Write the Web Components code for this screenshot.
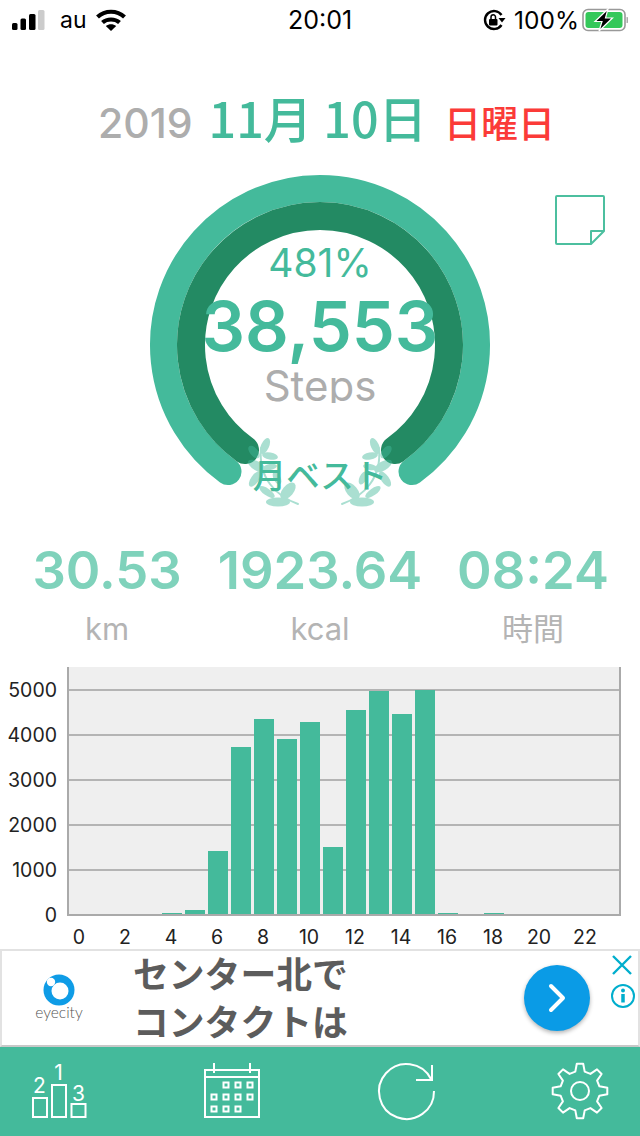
<!DOCTYPE html>
<html lang="ja">
<head>
<meta charset="utf-8">
<title>Steps</title>
<style>
  html, body { margin: 0; padding: 0; background: white; }
  body {
    width: 640px;
    height: 1136px;
    overflow: hidden;
    display: flex;
    flex-direction: column;
    font-family: Inter, "Noto Sans CJK JP", sans-serif;
    --green: #44ba9b;
    --cjk: "Noto Sans CJK JP", Inter, sans-serif;
  }
  hourly-chart { margin-top: auto; }
</style>
</head>
<body>
<status-bar></status-bar>
<date-header year="2019" day="11月 10日" weekday="日曜日"></date-header>
<step-gauge percent="481%" steps="38,553" unit="Steps" badge="月ベスト"></step-gauge>
<stat-row>
  <stat-item value="30.53" label="km"></stat-item>
  <stat-item value="1923.64" label="kcal"></stat-item>
  <stat-item value="08:24" label="時間"></stat-item>
</stat-row>
<hourly-chart data="0,0,0,0,20,90,1400,3733,4355,3911,4289,1489,4555,4978,4467,5000,25,0,25,0,0,0,0,0"></hourly-chart>
<ad-banner></ad-banner>
<tab-bar></tab-bar>

<script>
class StatusBar extends HTMLElement {
  constructor() {
    super();
    this.attachShadow({ mode: 'open' }).innerHTML = `
    <style>
      :host {
        display: flex;
        align-items: center;
        height: 40px;
        padding: 0 12px;
        font-size: 24px;
        color: #000;
      }
      .left, .right { flex: 1; display: flex; align-items: center; }
      .right { justify-content: flex-end; }
      svg { display: block; }
      .time { font-size: 25px; }
      .carrier { margin: 0 9px 0 15px; font-size: 23px; }
      .batt { margin-left: 3px; }
      .pct { margin-left: 8px; font-size: 24.5px; }
    </style>
    <div class="left">
      <svg width="33" height="20" viewBox="0 0 33 20">
        <rect x="0" y="13" width="5.5" height="7" rx="1.5" fill="#000"/>
        <rect x="8.5" y="8.5" width="5.5" height="11.5" rx="1.5" fill="#000"/>
        <rect x="17" y="4" width="6.5" height="16" rx="1.5" fill="#000"/>
        <rect x="26" y="0" width="6.5" height="20" rx="1.5" fill="#ccc"/>
      </svg>
      <span class="carrier">au</span>
      <svg width="30" height="22" viewBox="0 0 30 22" fill="none" stroke="#000" stroke-width="4.2">
        <path d="M1.5 8 C9 1 21 1 28.5 8"/>
        <path d="M6.5 13.5 C11 9.5 19 9.5 23.5 13.5"/>
        <path d="M15 22 L9.8 17 C13 14.8 17 14.8 20.2 17 Z" fill="#000" stroke="none"/>
      </svg>
    </div>
    <span class="time">20:01</span>
    <div class="right">
      <svg width="23" height="22" viewBox="0 0 23 22" fill="none">
        <path d="M18.5 6 A9 9 0 1 0 18.5 16" stroke="#000" stroke-width="2.4"/>
        <path d="M15.5 9 L22.5 9 L19 13.5 Z" fill="#000"/>
        <rect x="6" y="10" width="8.5" height="6.5" rx="1" fill="#000"/>
        <path d="M8 10 V8 A2.2 2.2 0 0 1 12.5 8 V10" stroke="#000" stroke-width="1.5"/>
      </svg>
      <span class="pct">100%</span>
      <svg class="batt" width="46" height="24" viewBox="0 0 46 24" fill="none">
        <rect x="1" y="1.5" width="42" height="21" rx="5" stroke="#999" stroke-width="1.6"/>
        <rect x="3.5" y="4" width="37" height="16" rx="3" fill="#34c85a"/>
        <path d="M44.5 9 V15 A3 3 0 0 0 44.5 9 Z" fill="#aaa"/>
        <path d="M26 1 L13 13.5 H20 L17 23 L30.5 10 H23.5 Z" fill="#000" stroke="#fff" stroke-width="1.2"/>
      </svg>
    </div>
    `;
  }
}

class DateHeader extends HTMLElement {
  constructor() {
    super();
    this.attachShadow({ mode: 'open' });
  }

  connectedCallback() {
    this.shadowRoot.innerHTML = `
    <style>
      :host {
        display: flex;
        justify-content: center;
        align-items: baseline;
        height: 125px;
        box-sizing: border-box;
        padding: 47px 0 0 13px;
        gap: 20px;
        line-height: 60px;
        font-family: var(--cjk);
      }
      .year { font: 500 41px/60px Inter, sans-serif; color: #adadad; margin-right: -4px; }
      .day { font-size: 48.5px; font-weight: 500; color: var(--green); }
      .weekday { font-size: 37px; font-weight: 500; color: #fb3b38; margin-left: -3px; }
    </style>
    <span class="year">${this.getAttribute('year')}</span>
    <span class="day">${this.getAttribute('day')}</span>
    <span class="weekday">${this.getAttribute('weekday')}</span>
    `;
  }
}

// leaves of the left branch, mirrored for the right one: cx, cy, rx, ry, angle
const LEAVES = [
  [265, 446, 8.5, 4, -65], [270, 456, 8, 3.5, 10], [254, 452, 7.5, 4, 50],
  [257, 466, 10, 4.5, 30], [255, 479, 9, 4, -55], [270, 467, 7, 3, -10],
  [277, 478, 7, 3.5, 65], [288, 491, 10, 5.5, -50], [267, 492, 9, 3.5, 35],
  [278, 502, 12, 4.5, 0],
];
const STEM = 'M298 504 C276 496 258 478 261 448';

class StepGauge extends HTMLElement {
  constructor() {
    super();
    this.attachShadow({ mode: 'open' });
  }

  connectedCallback() {
    const leaves = LEAVES.map(([cx, cy, rx, ry, a]) =>
      `<ellipse cx="${cx}" cy="${cy}" rx="${rx}" ry="${ry}" transform="rotate(${a} ${cx} ${cy})"/>`).join('');
    const branch = `${leaves}<path d="${STEM}" fill="none" stroke="#44ba9b" stroke-width="2"/>`;
    this.shadowRoot.innerHTML = `
    <style>
      :host {
        display: grid;
        height: 350px;
        position: relative;
        color: var(--green);
      }
      svg.ring, .labels { grid-area: 1 / 1; }
      svg.ring { display: block; }
      .labels {
        display: flex;
        flex-direction: column;
        align-items: center;
        padding-top: 73px;
      }
      .percent { font-size: 39px; line-height: 50px; }
      .steps { font-size: 68.5px; line-height: 76px; font-weight: 600; margin-top: 1px; }
      .unit { font-size: 42px; line-height: 42px; height: 38px; overflow: hidden; color: #adadad; }
      .badge { font: 500 33.5px/40px var(--cjk); margin-top: 51px; }
      .note { position: absolute; left: 554px; top: 29px; }
    </style>
    <svg class="ring" width="640" height="350" viewBox="0 165 640 350" fill="none" stroke-linecap="round">
      <path d="M228 471.6 A156.5 156.5 0 1 1 412 471.6" stroke="#44ba9b" stroke-width="27"/>
      <path d="M245 450 A129 129 0 1 1 395 450" stroke="#238a63" stroke-width="28"/>
      <g opacity=".45" fill="#44ba9b">
        <g>${branch}</g>
        <g transform="matrix(-1 0 0 1 640 0)">${branch}</g>
      </g>
    </svg>
    <div class="labels">
      <div class="percent">${this.getAttribute('percent')}</div>
      <div class="steps">${this.getAttribute('steps')}</div>
      <div class="unit">${this.getAttribute('unit')}</div>
      <div class="badge">${this.getAttribute('badge')}</div>
    </div>
    <svg class="note" width="52" height="52" viewBox="0 0 52 52" fill="none" stroke="#4cbf9f" stroke-width="2" stroke-linejoin="round">
      <path d="M3 2 H49 A1 1 0 0 1 50 3 V37 L37 50 H3 A1 1 0 0 1 2 49 V3 A1 1 0 0 1 3 2 Z"/>
      <path d="M37 50 V37 H50"/>
    </svg>
    `;
  }
}

class StatRow extends HTMLElement {
  constructor() {
    super();
    this.attachShadow({ mode: 'open' }).innerHTML = `
    <style>
      :host {
        display: grid;
        grid-template-columns: repeat(3, 213px);
        justify-content: center;
        padding-top: 22px;
      }
    </style>
    <slot></slot>
    `;
  }
}

class StatItem extends HTMLElement {
  constructor() {
    super();
    this.attachShadow({ mode: 'open' });
  }

  connectedCallback() {
    this.shadowRoot.innerHTML = `
    <style>
      :host {
        display: flex;
        flex-direction: column;
        align-items: center;
      }
      .value { font-size: 52.5px; line-height: 66px; font-weight: 600; color: #7fd2bb; white-space: nowrap; }
      .label { font: 31px/44px Inter, var(--cjk); color: #b4b4b4; margin-top: 4px; }
    </style>
    <div class="value">${this.getAttribute('value')}</div>
    <div class="label">${this.getAttribute('label')}</div>
    `;
  }
}

class HourlyChart extends HTMLElement {
  constructor() {
    super();
    this.attachShadow({ mode: 'open' });
  }

  connectedCallback() {
    const values = this.getAttribute('data').split(',').map(Number);
    const yLabels = [5000, 4000, 3000, 2000, 1000, 0];
    const xLabels = [...Array(12)].map((_, i) => i * 2);
    this.shadowRoot.innerHTML = `
    <style>
      :host {
        display: grid;
        grid-template-columns: 67px 554px;
        grid-template-rows: 249px 33px;
        font-size: 19.5px;
        color: #222;
      }
      .y-axis { grid-row: 1 / 3; padding-top: 0.5px; height: 270px; }
      .y-axis div { height: 45px; line-height: 45px; text-align: right; padding-right: 10px; }
      .plot {
        display: flex;
        align-items: flex-end;
        gap: 3.5px;
        box-sizing: border-box;
        padding-left: 1px;
        border: solid #aaa;
        border-width: 0 2px 2px 2px;
        background-color: #efefef;
        background-image: linear-gradient(#b4b4b4 2px, transparent 2px);
        background-size: 100% 45px;
        background-position: 0 22px;
        background-repeat: repeat-y;
      }
      .bar { flex: none; width: 19.5px; background: var(--green); }
      .x-axis { display: flex; margin-left: -11px; line-height: 24px; padding-top: 9px; }
      .x-axis div { flex: none; width: 46px; text-align: center; }
    </style>
    <div class="y-axis">${yLabels.map(v => `<div>${v}</div>`).join('')}</div>
    <div class="plot">${values.map(v =>
      `<div class="bar" style="height:${v * 0.0448}px"></div>`).join('')}</div>
    <div class="x-axis">${xLabels.map(v => `<div>${v}</div>`).join('')}</div>
    `;
  }
}

class AdBanner extends HTMLElement {
  constructor() {
    super();
    this.attachShadow({ mode: 'open' }).innerHTML = `
    <style>
      :host {
        display: flex;
        align-items: center;
        height: 98px;
        box-sizing: border-box;
        border: solid #e2e2e2;
        border-width: 2px;
        border-bottom-color: #c8c8c8;
        position: relative;
        background: white;
      }
      .logo { flex: none; width: 131px; display: block; }
      .copy {
        font: 700 35.8px/48px var(--cjk);
        color: #5c5c5c;
        flex: 1;
        white-space: nowrap;
        margin-top: -4px;
      }
      .go { flex: none; width: 66px; height: 66px; border-radius: 50%; background: #0a9be6;
        box-shadow: 0 2px 4px rgba(0,0,0,.3); margin-right: 48px; display: flex; align-items: center; justify-content: center; }
      .close { position: absolute; right: 4px; top: 2px; }
      .info { position: absolute; right: 2px; top: 32px; }
    </style>
    <svg class="logo" width="131" height="94" viewBox="0 0 131 94">
      <circle cx="57" cy="39" r="15.5" fill="#0f9ce6"/>
      <circle cx="58" cy="40" r="8.5" fill="#fff"/>
      <circle cx="49" cy="31" r="4.2" fill="#fff"/>
      <text x="57" y="67" text-anchor="middle" font-family="Lato, sans-serif" font-weight="300" font-size="15.5" fill="#555">eyecity</text>
    </svg>
    <div class="copy">センター北で<br>コンタクトは</div>
    <div class="go">
      <svg width="20" height="30" viewBox="0 0 20 30" fill="none" stroke="#fff" stroke-width="4" stroke-linecap="round" stroke-linejoin="round">
        <path d="M4 3 L16 15 L4 27"/>
      </svg>
    </div>
    <svg class="close" width="24" height="24" viewBox="0 0 24 24" fill="none" stroke="#00aecd" stroke-width="2.4">
      <path d="M3 3 L21 21 M21 3 L3 21"/>
    </svg>
    <svg class="info" width="26" height="26" viewBox="0 0 26 26" fill="none" stroke="#00aecd">
      <circle cx="13" cy="13" r="11" stroke-width="2"/>
      <circle cx="13" cy="7.5" r="2" fill="#00aecd" stroke="none"/>
      <path d="M13 11 V19.5" stroke-width="3.5"/>
    </svg>
    `;
  }
}

const gearPath = (cx, cy, teeth, outer, inner) => {
  const points = [];
  const step = Math.PI * 2 / teeth;
  for (let i = 0; i < teeth; i++) {
    const a = -Math.PI / 2 + i * step;
    const at = (r, da) => `${(cx + Math.cos(a + da) * r).toFixed(1)} ${(cy + Math.sin(a + da) * r).toFixed(1)}`;
    points.push(`L ${at(inner, -step * 0.3)} L ${at(outer, -step * 0.15)} L ${at(outer, step * 0.15)} L ${at(inner, step * 0.3)}`);
  }
  return 'M' + points.join(' ').slice(1) + ' Z';
};

class TabBar extends HTMLElement {
  constructor() {
    super();
    const cells = [[226, 1085], [238, 1085], [250, 1085],
      [214, 1097], [226, 1097], [238, 1097], [250, 1097],
      [214, 1109], [226, 1109], [238, 1109]]
      .map(([x, y]) => `<rect x="${x - 2.5 - 197}" y="${y - 2.5 - 1059}" width="5" height="5"/>`);
    this.attachShadow({ mode: 'open' }).innerHTML = `
    <style>
      :host {
        display: grid;
        grid-template-columns: repeat(4, 174px);
        justify-content: center;
        align-items: center;
        height: 89px;
        background: var(--green);
      }
      svg { display: block; justify-self: center; }
      text { font: 21px Inter, sans-serif; fill: #fff; stroke: none; }
    </style>
    <svg width="72" height="65" viewBox="0 0 72 65" fill="none" stroke="#fff" stroke-width="2">
      <rect x="10" y="39" width="14" height="19"/>
      <rect x="29" y="26" width="14" height="32"/>
      <rect x="48.5" y="45" width="14" height="13"/>
      <text x="16.5" y="34" text-anchor="middle">2</text>
      <text x="35.5" y="21" text-anchor="middle">1</text>
      <text x="55.5" y="42" text-anchor="middle">3</text>
    </svg>
    <svg width="72" height="65" viewBox="0 0 72 65" fill="none" stroke="#fff" stroke-width="2">
      <rect x="8" y="11" width="54" height="47"/>
      <path d="M8 18 H62 M17 4 V14 M53 4 V14"/>
      ${cells.join('')}
    </svg>
    <svg width="72" height="65" viewBox="0 0 72 65" fill="none" stroke="#fff" stroke-width="2">
      <path d="M63 32 A27.5 27.5 0 1 1 60 20"/>
      <path d="M45 21 H61 V6"/>
    </svg>
    <svg width="72" height="65" viewBox="0 0 72 65" fill="none" stroke="#fff" stroke-width="2" stroke-linejoin="round">
      <path d="${gearPath(35, 32, 8, 27.5, 20)}"/>
      <circle cx="35" cy="32" r="9"/>
    </svg>
    `;
  }
}

customElements.define('status-bar', StatusBar);
customElements.define('date-header', DateHeader);
customElements.define('step-gauge', StepGauge);
customElements.define('stat-row', StatRow);
customElements.define('stat-item', StatItem);
customElements.define('hourly-chart', HourlyChart);
customElements.define('ad-banner', AdBanner);
customElements.define('tab-bar', TabBar);
</script>
</body>
</html>
